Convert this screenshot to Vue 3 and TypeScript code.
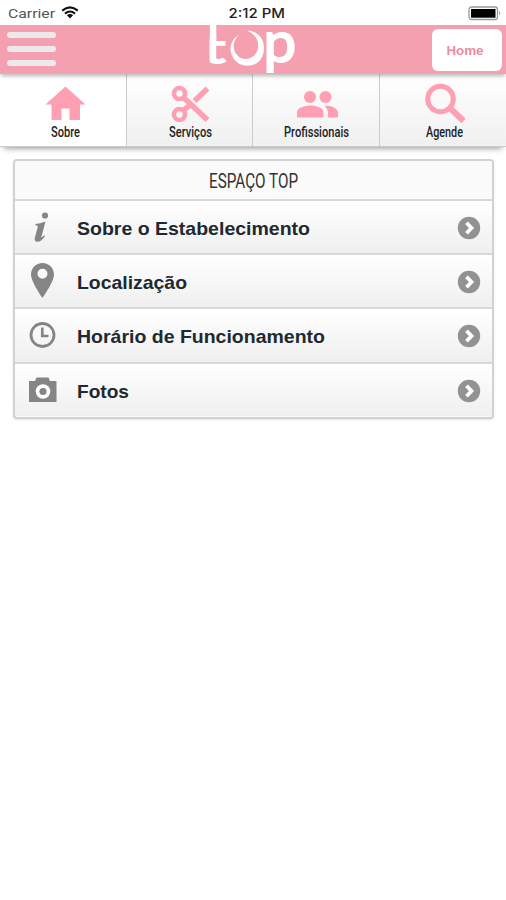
<script setup lang="ts">
interface Tab { id: string; label: string; width: number; active?: boolean }
interface Row { id: string; label: string; width: number }

const tabs: Tab[] = [
  { id: 'home', label: 'Sobre', width: 29, active: true },
  { id: 'scissors', label: 'Serviços', width: 43 },
  { id: 'people', label: 'Profissionais', width: 65 },
  { id: 'search', label: 'Agende', width: 37 },
]
const rows: Row[] = [
  { id: 'info', label: 'Sobre o Estabelecimento', width: 233 },
  { id: 'pin', label: 'Localização', width: 110 },
  { id: 'clock', label: 'Horário de Funcionamento', width: 248 },
  { id: 'camera', label: 'Fotos', width: 52 },
]
</script>

<template>
  <main class="screen">
    <div class="status">
      <div class="carrier">
        <svg width="48" height="18"><text x="0" y="13" textLength="47" lengthAdjust="spacingAndGlyphs">Carrier</text></svg>
        <svg class="wifi" width="18" height="13" viewBox="0 0 18 13">
          <path d="M1.2 4.6Q9-2 16.8 4.6M4 7.6Q9 3.4 14 7.6" fill="none" stroke="#111" stroke-width="2.1" />
          <path d="M5.9 9.3Q9 6.9 12.1 9.3L9 12.4z" fill="#111" />
        </svg>
      </div>
      <svg class="time" width="58" height="18"><text x="0.5" y="13" textLength="56.5" lengthAdjust="spacingAndGlyphs">2:12 PM</text></svg>
      <svg class="battery" width="34" height="16" viewBox="0 0 34 16">
        <rect x="1" y="1" width="28.5" height="12.5" rx="2.5" fill="#fff" stroke="#999" stroke-width="1.3" />
        <rect x="3" y="3" width="24.5" height="8.7" fill="#000" />
        <path d="M31 5Q33.5 7 31 9.5z" fill="#aaa" />
      </svg>
    </div>

    <header class="bar">
      <button class="menu" aria-label="Menu"><i /><i /><i /></button>
      <svg class="logo" width="92" height="49" viewBox="0 0 92 49" aria-label="top">
        <defs><clipPath id="tstem"><rect x="4.700" y="0" width="24" height="49" /></clipPath></defs>
        <g clip-path="url(#tstem)">
          <text class="mark" transform="translate(-2.500 38) scale(1.550 1)" font-size="41">t</text>
          <rect x="4.700" y="0" width="6.600" height="20" fill="#fff" />
        </g>
        <path d="M34 10C26 14 23.500 24 27.500 31.500C33 43 50 44 56.500 33C62.500 22 58 6 42 5.500C51.500 9.500 55.500 18 52 26.500C47.500 35.500 37 36 32 30C27 24 27.500 16 34 10z" fill="#fff" />
        <text class="mark" transform="translate(58.500 37) scale(1.020 1)" font-size="57">p</text>
      </svg>
      <button class="home">
        <svg width="38" height="18"><text x="0.5" y="13" textLength="37" lengthAdjust="spacingAndGlyphs">Home</text></svg>
      </button>
    </header>

    <nav class="tabs">
      <a v-for="t in tabs" :key="t.id" class="tab" :class="{ active: t.active }">
        <svg class="tab-icon" width="44" height="44" viewBox="0 0 44 44">
          <path v-if="t.id === 'home'" d="M22.5 10.5L42.5 28.5H37V44H26.500V32.500H18.500V44H8.500V28.500H2.500z" />
          <g v-else-if="t.id === 'scissors'" fill="none" stroke="#ff9fb3">
            <circle cx="11.500" cy="17.500" r="5.500" stroke-width="4.600" />
            <circle cx="11.500" cy="38.500" r="5.500" stroke-width="4.600" />
            <path d="M15.500 21.500L39.500 44M15.500 34.500L22.500 28.500M26.500 25L39.500 12.500" stroke-width="5.500" />
          </g>
          <g v-else-if="t.id === 'people'">
            <circle cx="16" cy="21" r="6" /><circle cx="31.500" cy="21" r="6" />
            <path d="M3 41.500V36.500C3 31.500 11 29.500 16.500 29.500S29.500 31.500 29.500 36.500V41.500z" />
            <path d="M30.500 30C37 29 44 32 44 37V41.500H34V37C34 34 32.500 32 30.500 30z" />
          </g>
          <g v-else fill="none" stroke="#ff9fb3">
            <circle cx="17.500" cy="23" r="12.800" stroke-width="5" />
            <path d="M27 32L40.500 45" stroke-width="6" />
          </g>
        </svg>
        <svg class="tab-label" :width="t.width" height="20"><text x="0" y="14" :textLength="t.width" lengthAdjust="spacingAndGlyphs">{{ t.label }}</text></svg>
      </a>
    </nav>

    <section class="panel">
      <h1><svg width="90" height="30"><text x="0" y="21.500" textLength="89" lengthAdjust="spacingAndGlyphs">ESPAÇO TOP</text></svg></h1>
      <a v-for="r in rows" :key="r.id" class="row">
        <svg class="row-icon" width="32" height="40" viewBox="0 0 32 40">
          <g v-if="r.id === 'info'">
            <circle cx="18" cy="7.500" r="3.100" />
            <path d="M8.500 16Q13 15.500 18.500 13.500L14.500 28.500Q13.600 31.200 17 27.200L18 28.200Q14 33.800 10.300 33.800Q7 33.500 7.800 29.800L10.800 19Q11.300 17 8.200 17.300z" />
          </g>
          <path v-else-if="r.id === 'pin'" fill-rule="evenodd" d="M15.500 1C9 1 4 6 4 12.500C4 20 15.500 36 15.500 36S27 20 27 12.500C27 6 22 1 15.500 1zM15.500 6.700A5 5 0 1 1 15.500 16.700A5 5 0 1 1 15.500 6.700z" />
          <g v-else-if="r.id === 'clock'" fill="none" stroke="#858585">
            <circle cx="15.500" cy="19" r="11.500" stroke-width="2.800" />
            <path d="M15.300 11.500V20H21.500" stroke-width="2.700" />
          </g>
          <g v-else>
            <path d="M2 10H8L9.500 6.500H21.500L23 10H29.500V31H2z" />
            <circle cx="16" cy="20.500" r="7.300" fill="#fff" /><circle cx="16" cy="20.500" r="3.600" />
          </g>
        </svg>
        <svg class="row-label" :width="r.width" height="28"><text x="0" y="20" :textLength="r.width" lengthAdjust="spacingAndGlyphs">{{ r.label }}</text></svg>
        <svg class="chevron" width="24" height="24" viewBox="0 0 24 24">
          <circle cx="12" cy="12" r="11.200" fill="#929292" />
          <path d="M9.500 6.700L14.500 12L9.500 17.300" fill="none" stroke="#fff" stroke-width="3.800" />
        </svg>
      </a>
    </section>
  </main>
</template>

<style>
body { margin: 0; background: #fff; }
</style>

<style scoped>
.screen { width: 506px; height: 900px; overflow: hidden; background: #fff; font-family: "Liberation Sans", Arial, sans-serif; }
svg { display: block; flex: none; overflow: visible; }
button { border: 0; padding: 0; margin: 0; font: inherit; }
.status { height: 25px; display: grid; grid-template-columns: 228px 1fr 38px; align-items: start; box-sizing: border-box; padding-top: 5px; }
.carrier { display: flex; gap: 5px; padding-left: 8px; font: 13.500px Roboto, sans-serif; fill: #555; }
.wifi { margin-top: 1px; }
.time { font: 500 13px Inter, sans-serif; fill: #222; }
.battery { margin-top: 1px; }
.bar { position: relative; z-index: 1; height: 48.500px; background: #f4a0b0; display: flex; align-items: flex-start; box-shadow: 0 3px 4px -1px rgba(0,0,0,.28); }
.menu { width: 49px; margin: 7px 0 0 7px; display: grid; gap: 8px; background: none; }
.menu i { height: 6px; border-radius: 3px; background: #eee9e9; }
.logo { margin-left: 149px; }
.mark { font-family: Lato, sans-serif; font-weight: 400; fill: #fff; stroke: #fff; stroke-width: 2px; }
.home { width: 70px; height: 42px; margin: 4px 4px 0 auto; border-radius: 6px; background: #fff; display: flex; align-items: center; justify-content: center; padding: 2px 5px 0 0; box-sizing: border-box; }
.home text { font: 700 12.500px "Liberation Sans", Arial, sans-serif; fill: #ee8ba2; }
.tabs { height: 73.500px; display: grid; grid-template-columns: 127px 126px 126.500px 1fr; box-shadow: 0 5px 6px -4px rgba(0,0,0,.45); }
.tab { display: flex; flex-direction: column; align-items: center; box-sizing: border-box; border-right: 1px solid #ccc; border-bottom: 1px solid #ccc; background: linear-gradient(#fff, #f0f0f0); padding-left: 1px; }
.tab:last-child { border-right: 0; padding-left: 4px; }
.tab.active { background: #fff; padding-left: 4px; }
.tab-icon { fill: #ff9fb3; margin-top: 2px; }
.tab-label { margin-top: 3px; }
.tab-label text { font: 500 14px Roboto, sans-serif; fill: #222; }
.panel { width: 481px; height: 260px; margin: 12px 0 0 13px; box-sizing: border-box; border: 2px solid #d2d2d2; border-radius: 4px; background: #fafafa; box-shadow: 0 1px 2px rgba(0,0,0,.12); overflow: hidden; }
h1 { height: 38px; margin: 0; display: flex; align-items: center; justify-content: center; padding-top: 1px; box-sizing: border-box; }
h1 text { font: 400 21px Roboto, sans-serif; fill: #333; }
.row { height: 54.200px; box-sizing: border-box; border-top: 2px solid #d8d8d8; display: flex; align-items: center; padding: 2px 11px 0 12px; background: linear-gradient(#fff, #efefef); }
.row-icon { fill: #858585; }
.row-label { margin-left: 18px; padding-top: 2px; }
.row-label text { font: 700 19px "Liberation Sans", Arial, sans-serif; fill: #202930; }
.chevron { margin-left: auto; }
</style>
